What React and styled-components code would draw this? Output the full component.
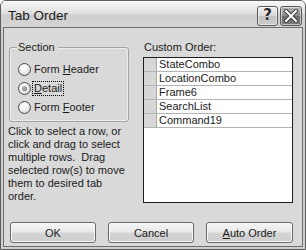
import React from "react";
import styled, { createGlobalStyle } from "styled-components";

const Global = createGlobalStyle`
  html, body { margin: 0; padding: 0; background: #ffffff; }
  * { box-sizing: border-box; }
`;

const Window = styled.div`
  width: 306px;
  height: 250px;
  border: 1px solid #5c5c5c;
  border-radius: 6px 6px 0 0;
  background: #cfcfcf;
  display: flex;
  flex-direction: column;
  font-family: "Liberation Sans", Arial, sans-serif;
  overflow: hidden;
`;

const TitleBar = styled.div`
  height: 26px;
  flex: none;
  display: flex;
  align-items: center;
  justify-content: space-between;
  padding: 0 3px 0 7px;
  background: linear-gradient(#f6f6f6 0%, #e2e2e2 45%, #cfcfcf 55%, #d4d4d4 100%);
  box-shadow: inset 0 1px 0 #ffffff;
`;

const Title = styled.span`
  font-size: 13.5px;
  color: #1c1c1c;
  margin-top: 2px;
`;

const Caption = styled.div`
  display: flex;
  gap: 2px;
  margin-top: 3px;
`;

const CapButton = styled.div`
  width: ${(p) => p.$w}px;
  height: 20px;
  border: 1px solid #5a5a5a;
  border-radius: 3px;
  display: flex;
  align-items: center;
  justify-content: center;
  background: ${(p) =>
    p.$dark
      ? "linear-gradient(#b4b4b4 0%, #8c8c8c 48%, #6c6c6c 52%, #7a7a7a 100%)"
      : "linear-gradient(#f0f0f0 0%, #d8d8d8 48%, #c2c2c2 52%, #cccccc 100%)"};
  box-shadow: inset 0 0 0 1px rgba(255, 255, 255, 0.55);
`;

const Help = styled.span`
  font-family: "DejaVu Sans", sans-serif;
  font-weight: bold;
  font-size: 15px;
  color: #2a2a2a;
  text-shadow: 0 0 1px #ffffff, 0 0 1px #ffffff;
  line-height: 1;
`;

const FrameBody = styled.div`
  flex: 1;
  padding: 0 2px 2px 2px;
  display: flex;
`;

const Client = styled.div`
  flex: 1;
  border: 1px solid #6e6e6e;
  background: #d9d9d9;
  padding: 13px 8px 0 4px;
  display: grid;
  grid-template-columns: 122px 150px;
  grid-template-rows: auto auto;
  column-gap: 13px;
  font-size: 11px;
  color: #1a1a1a;
`;

const LeftCol = styled.div`
  display: flex;
  flex-direction: column;
`;

const Group = styled.fieldset`
  margin: 0 0 0 1px;
  width: 120px;
  padding: 6px 6px 4px 8px;
  border: 1px solid #a2a2a2;
  border-radius: 3px;
  box-shadow: inset 0 0 0 1px #ececec;
`;

const Legend = styled.legend`
  padding: 0 3px 0 1px;
  margin-left: -1px;
  line-height: 13px;
  background: #d9d9d9;
`;

const RadioRow = styled.label`
  height: 19px;
  display: flex;
  align-items: center;
  gap: 2px;
`;

const Circle = styled.span`
  width: 13px;
  height: 13px;
  border-radius: 50%;
  border: 1px solid #4a4a4a;
  background: radial-gradient(circle at 40% 35%, #ffffff 0%, #f2f2f2 40%, #c8c8c8 100%);
  display: flex;
  align-items: center;
  justify-content: center;
  flex: none;
`;

const Dot = styled.span`
  width: 5px;
  height: 5px;
  border-radius: 50%;
  background: radial-gradient(circle at 40% 35%, #bdbdbd, #6a6a6a);
`;

const RadioText = styled.span`
  line-height: 13px;
  padding: 0 1px;
  outline: ${(p) => (p.$focus ? "1px dotted #000" : "none")};
  outline-offset: 0;
`;

const U = styled.span`
  text-decoration: underline;
`;

const HelpText = styled.p`
  margin: 3px 0 0 0;
  line-height: 13px;
  width: 124px;
`;

const RightCol = styled.div`
  display: flex;
  flex-direction: column;
`;

const Label = styled.div`
  line-height: 13px;
  padding-left: 1px;
`;

const List = styled.div`
  margin-top: 3px;
  height: 146px;
  border: 1px solid #1e1e1e;
  background: #ffffff;
  display: flex;
  flex-direction: column;
`;

const Row = styled.div`
  height: 14px;
  display: flex;
  border-bottom: 1px solid #b4b4b4;
`;

const Selector = styled.div`
  width: 13px;
  flex: none;
  background: #d6d6d6;
  border-right: 1px solid #a8a8a8;
`;

const RowText = styled.div`
  padding-left: 2px;
  line-height: 13px;
`;

const ButtonRow = styled.div`
  grid-column: 1 / span 2;
  display: flex;
  gap: 12px;
  margin: 16px 0 0 2px;
`;

const Button = styled.div`
  width: ${(p) => p.$w || 87}px;
  height: 21px;
  border: 1px solid #6a6a6a;
  border-radius: 3px;
  display: flex;
  align-items: center;
  justify-content: center;
  background: linear-gradient(#f6f6f6 0%, #e8e8e8 48%, #d4d4d4 52%, #cecece 100%);
  box-shadow: inset 0 0 0 1px #f8f8f8;
  color: #1a1a1a;
`;

const rows = ["StateCombo", "LocationCombo", "Frame6", "SearchList", "Command19"];

export default function App() {
  return (
    <>
      <Global />
      <Window>
        <TitleBar>
          <Title>Tab Order</Title>
          <Caption>
            <CapButton $w={21}>
              <Help>?</Help>
            </CapButton>
            <CapButton $w={22} $dark>
              <svg width="14" height="14" viewBox="0 0 14 14">
                <path d="M2 2 L12 12 M12 2 L2 12" stroke="#3a3a3a" strokeWidth="4" strokeLinecap="square" />
                <path d="M2 2 L12 12 M12 2 L2 12" stroke="#ffffff" strokeWidth="2" strokeLinecap="square" />
              </svg>
            </CapButton>
          </Caption>
        </TitleBar>
        <FrameBody>
          <Client>
            <LeftCol>
              <Group>
                <Legend>Section</Legend>
                <RadioRow>
                  <Circle />
                  <RadioText>
                    Form <U>H</U>eader
                  </RadioText>
                </RadioRow>
                <RadioRow>
                  <Circle>
                    <Dot />
                  </Circle>
                  <RadioText $focus>
                    <U>D</U>etail
                  </RadioText>
                </RadioRow>
                <RadioRow>
                  <Circle />
                  <RadioText>
                    Form <U>F</U>ooter
                  </RadioText>
                </RadioRow>
              </Group>
              <HelpText>
                Click to select a row, or click and drag to select multiple rows.&nbsp; Drag selected
                row(s) to move them to desired tab order.
              </HelpText>
            </LeftCol>
            <RightCol>
              <Label>Custom Order:</Label>
              <List>
                {rows.map((r) => (
                  <Row key={r}>
                    <Selector />
                    <RowText>{r}</RowText>
                  </Row>
                ))}
              </List>
            </RightCol>
            <ButtonRow>
              <Button>OK</Button>
              <Button>Cancel</Button>
              <Button $w={88}>
                <span>
                  <U>A</U>uto Order
                </span>
              </Button>
            </ButtonRow>
          </Client>
        </FrameBody>
      </Window>
    </>
  );
}
